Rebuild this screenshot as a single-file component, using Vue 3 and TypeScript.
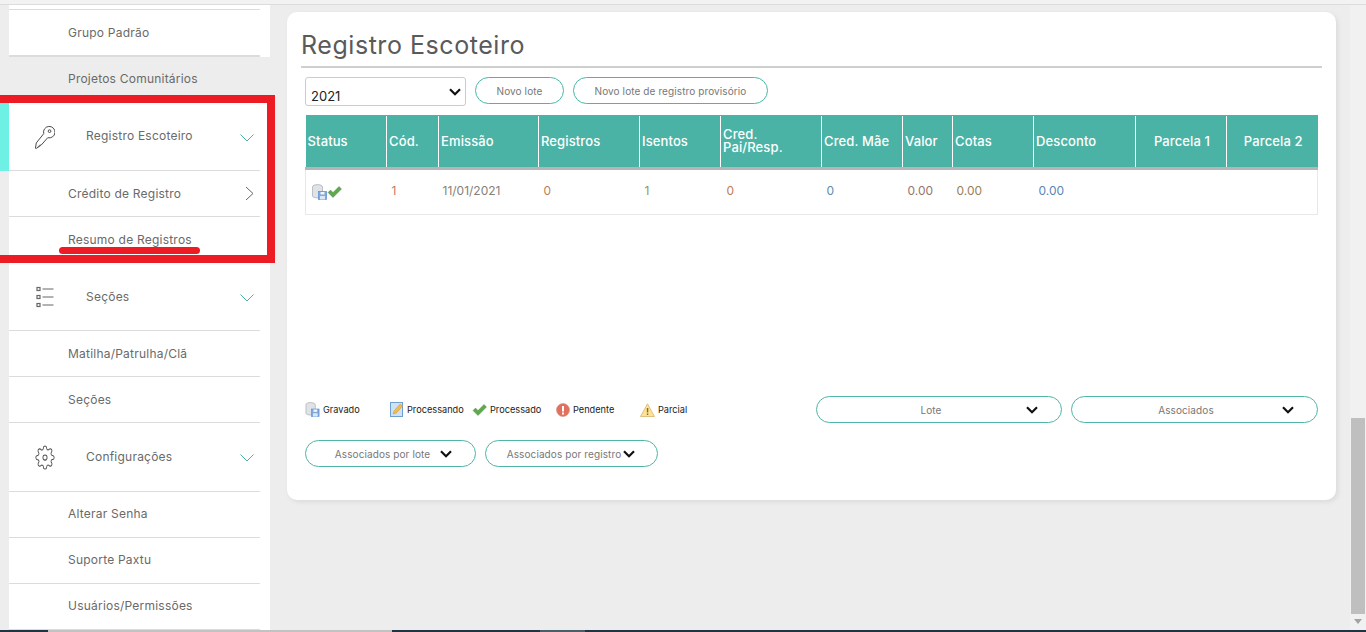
<script setup lang="ts">
interface MenuRow {
  label: string
  icon?: 'key' | 'list' | 'gear'
  active?: boolean
  sub?: boolean
}

interface Col {
  title: string
  width: number
  value: string
  color: string
  pad: number
  center?: boolean
}

const menu: MenuRow[] = [
  { label: 'Registro Escoteiro', icon: 'key', active: true },
  { label: 'Crédito de Registro', sub: true },
  { label: 'Resumo de Registros' },
  { label: 'Seções', icon: 'list' },
  { label: 'Matilha/Patrulha/Clã' },
  { label: 'Seções' },
  { label: 'Configurações', icon: 'gear' },
  { label: 'Alterar Senha' },
  { label: 'Suporte Paxtu' },
  { label: 'Usuários/Permissões' }
]

const cols: Col[] = [
  { title: 'Status', width: 81, value: '', color: '#666', pad: 0 },
  { title: 'Cód.', width: 52, value: '1', color: '#c9785f', pad: 5 },
  { title: 'Emissão', width: 100, value: '11/01/2021', color: '#85807a', pad: 4 },
  { title: 'Registros', width: 101, value: '0', color: '#bd8055', pad: 5 },
  { title: 'Isentos', width: 81, value: '1', color: '#8a9660', pad: 5 },
  { title: 'Cred.\nPai/Resp.', width: 101, value: '0', color: '#c07a5a', pad: 6 },
  { title: 'Cred. Mãe', width: 81, value: '0', color: '#5a8db5', pad: 5 },
  { title: 'Valor', width: 50, value: '0.00', color: '#96756a', pad: 5 },
  { title: 'Cotas', width: 81, value: '0.00', color: '#98805a', pad: 4 },
  { title: 'Desconto', width: 102, value: '0.00', color: '#5a85b5', pad: 5 },
  { title: 'Parcela 1', width: 91, value: '', color: '#666', pad: 0, center: true },
  { title: 'Parcela 2', width: 91, value: '', color: '#666', pad: 0, center: true }
]

const legend = [
  { kind: 'disk', label: 'Gravado', width: 85 },
  { kind: 'edit', label: 'Processando', width: 82 },
  { kind: 'check', label: 'Processado', width: 84 },
  { kind: 'error', label: 'Pendente', width: 84 },
  { kind: 'warn', label: 'Parcial', width: 60 }
]
</script>

<template>
  <div class="page">
    <div class="top-line"></div>
    <div class="body">
      <aside class="side">
        <div class="side-row first"><span>Grupo Padrão</span></div>
        <div class="side-row plain"><span>Projetos Comunitários</span></div>
        <div
          v-for="row in menu"
          :key="row.label + (row.icon || '')"
          class="side-row"
          :class="{ head: row.icon, active: row.active, tall: row.icon === 'gear' }"
        >
          <svg v-if="row.icon === 'key'" class="mi" viewBox="0 0 22 26" fill="none" stroke="#4a4a4a" stroke-width="1.1">
            <path d="M9.600 8.800A6.300 6.300 0 1 1 14 13.200L6.600 21.600l-1.200-.4-.2 1.600-1.500-.2-.3 1.600-1.200-.1-.9 1.200-.8-.5L1.400 19z" />
            <circle cx="16" cy="6" r="1.500" />
          </svg>
          <svg v-else-if="row.icon === 'list'" class="mi" viewBox="0 0 20 24" fill="none" stroke="#666" stroke-width="1.200">
            <rect x="2" y="2" width="3" height="3" />
            <rect x="2" y="10" width="3" height="3" />
            <rect x="2" y="18" width="3" height="3" />
            <path d="M7.500 3.500h11M7.500 11.500h11M7.500 19.500h11" />
          </svg>
          <svg v-else-if="row.icon === 'gear'" class="mi" viewBox="0 0 24 24" fill="none" stroke="#4a4a4a" stroke-width="1" preserveAspectRatio="none">
            <circle cx="12" cy="12" r="2.500" />
            <path d="M19.4 15a1.65 1.65 0 0 0 .33 1.82l.06.06a2 2 0 0 1 0 2.83 2 2 0 0 1-2.83 0l-.06-.06a1.65 1.65 0 0 0-1.82-.33 1.65 1.65 0 0 0-1 1.51V21a2 2 0 0 1-2 2 2 2 0 0 1-2-2v-.09A1.65 1.65 0 0 0 9 19.4a1.65 1.65 0 0 0-1.82.33l-.06.06a2 2 0 0 1-2.83 0 2 2 0 0 1 0-2.83l.06-.06a1.65 1.65 0 0 0 .33-1.82 1.65 1.65 0 0 0-1.51-1H3a2 2 0 0 1-2-2 2 2 0 0 1 2-2h.09A1.65 1.65 0 0 0 4.6 9a1.65 1.65 0 0 0-.33-1.82l-.06-.06a2 2 0 0 1 0-2.83 2 2 0 0 1 2.83 0l.06.06a1.65 1.65 0 0 0 1.82.33H9a1.65 1.65 0 0 0 1-1.51V3a2 2 0 0 1 2-2 2 2 0 0 1 2 2v.09a1.65 1.65 0 0 0 1 1.51 1.65 1.65 0 0 0 1.82-.33l.06-.06a2 2 0 0 1 2.83 0 2 2 0 0 1 0 2.83l-.06.06a1.65 1.65 0 0 0-.33 1.82V9a1.65 1.65 0 0 0 1.51 1H21a2 2 0 0 1 2 2 2 2 0 0 1-2 2h-.09a1.65 1.65 0 0 0-1.51 1z" />
          </svg>
          <span>{{ row.label }}</span>
          <svg v-if="row.icon" class="chev" viewBox="0 0 14 8" fill="none" stroke="#4db6a6">
            <path d="M.5 .5 7 7 13.500 .5" />
          </svg>
          <svg v-if="row.sub" class="arrow" viewBox="0 0 9 15" fill="none" stroke="#666">
            <path d="M1 1l7 6.500-7 6.500" />
          </svg>
        </div>
      </aside>

      <main class="main">
        <section class="card">
          <h1 class="title">Registro Escoteiro</h1>
          <div class="tools">
            <div class="select-wrap">
              <select class="year"><option>2021</option></select>
              <svg class="sel-chev" viewBox="0 0 12 8" fill="none" stroke="#111" stroke-width="2.200">
                <path d="M1 1.200l5 5 5-5" />
              </svg>
            </div>
            <button class="pill new-lot">Novo lote</button>
            <button class="pill new-prov">Novo lote de registro provisório</button>
          </div>

          <table class="grid">
            <colgroup>
              <col v-for="c in cols" :key="c.title" :style="{ width: c.width + 'px' }" />
            </colgroup>
            <thead>
              <tr>
                <th v-for="c in cols" :key="c.title" :class="{ center: c.center }">{{ c.title }}</th>
              </tr>
            </thead>
            <tbody>
              <tr>
                <td v-for="c in cols" :key="c.title" :style="{ color: c.color, paddingLeft: c.pad + 'px' }">
                  <span v-if="c.title === 'Status'" class="status-icons">
                    <svg width="15" height="16" viewBox="0 0 15 16">
                      <path d="M.5 3c0-3.200 10-3.200 10 0v9c0 2.500-10 2.500-10 0z" fill="#dfe2e6" stroke="#a5abb1" stroke-width=".7" />
                      <rect x="6.500" y="7.500" width="8" height="8" fill="#7ea9dc" stroke="#5b8fd0" stroke-width=".7" />
                      <rect x="8.500" y="8" width="4" height="2.500" fill="#f2f6fb" />
                      <rect x="8" y="12" width="5" height="3.500" fill="#dce8f5" />
                    </svg>
                    <svg width="15" height="12" viewBox="0 0 15 12">
                      <path d="M1 6.500 3.500 4l2.500 2.500L12 .5 14.500 3l-8.500 8.500z" fill="#5fa84f" stroke="#4a8a3e" stroke-width=".4" />
                    </svg>
                  </span>
                  {{ c.value }}
                </td>
              </tr>
            </tbody>
          </table>

          <div class="lower">
            <div class="legend">
              <div v-for="item in legend" :key="item.kind" class="leg" :style="{ width: item.width + 'px' }">
                <svg v-if="item.kind === 'disk'" width="15" height="15" viewBox="0 0 15 16">
                  <path d="M.5 3c0-3.200 10-3.200 10 0v9c0 2.500-10 2.500-10 0z" fill="#dfe2e6" stroke="#a5abb1" stroke-width=".7" />
                  <rect x="6.500" y="7.500" width="8" height="8" fill="#7ea9dc" stroke="#5b8fd0" stroke-width=".7" />
                  <rect x="8.500" y="8" width="4" height="2.500" fill="#f2f6fb" />
                  <rect x="8" y="12" width="5" height="3.500" fill="#dce8f5" />
                </svg>
                <svg v-else-if="item.kind === 'edit'" width="14" height="15" viewBox="0 0 14 15">
                  <rect x=".5" y=".5" width="12" height="14" fill="#cfe2f5" stroke="#6f9fd0" />
                  <path d="M3 12l1-3 6-7 2.500 2-6 7z" fill="#eebc55" stroke="#c99433" stroke-width=".5" />
                </svg>
                <svg v-else-if="item.kind === 'check'" width="15" height="12" viewBox="0 0 15 12">
                  <path d="M1 6.500 3.500 4l2.500 2.500L12 .5 14.500 3l-8.500 8.500z" fill="#5fa84f" stroke="#4a8a3e" stroke-width=".4" />
                </svg>
                <svg v-else-if="item.kind === 'error'" width="14" height="14" viewBox="0 0 14 14">
                  <circle cx="7" cy="7" r="6.500" fill="#e2705f" stroke="#d0917f" stroke-width=".6" />
                  <rect x="6" y="3" width="2" height="5.500" fill="#fff" />
                  <rect x="6" y="9.500" width="2" height="2" fill="#fff" />
                </svg>
                <svg v-else width="15" height="14" viewBox="0 0 15 14">
                  <path d="M7.500 .8 14.500 13.500H.5z" fill="#fbe49a" stroke="#d8b46a" stroke-width=".8" />
                  <rect x="6.800" y="5" width="1.500" height="4.500" fill="#9a6a1a" />
                  <rect x="6.800" y="10.500" width="1.500" height="1.500" fill="#9a6a1a" />
                </svg>
                <span>{{ item.label }}</span>
              </div>
            </div>
            <button class="pill drop lote">
              <span>Lote</span>
              <svg viewBox="0 0 12 8" fill="none" stroke="#111" stroke-width="2.200"><path d="M1 1.200l5 5 5-5" /></svg>
            </button>
            <button class="pill drop assoc">
              <span>Associados</span>
              <svg viewBox="0 0 12 8" fill="none" stroke="#111" stroke-width="2.200"><path d="M1 1.200l5 5 5-5" /></svg>
            </button>
          </div>

          <div class="bottom-btns">
            <button class="pill drop by-lot">
              <span>Associados por lote</span>
              <svg viewBox="0 0 12 8" fill="none" stroke="#111" stroke-width="2.200"><path d="M1 1.200l5 5 5-5" /></svg>
            </button>
            <button class="pill drop by-reg">
              <span>Associados por registro</span>
              <svg viewBox="0 0 12 8" fill="none" stroke="#111" stroke-width="2.200"><path d="M1 1.200l5 5 5-5" /></svg>
            </button>
          </div>
        </section>
      </main>

      <div class="scrollbar">
        <div class="thumb"></div>
        <div class="down"></div>
      </div>

      <!-- marcacao vermelha por cima do menu -->
      <div class="mark-box"></div>
      <div class="mark-line"></div>
    </div>
    <div class="taskbar">
      <i class="t1"></i><i class="t2"></i><i class="t3"></i><i class="t4"></i><i class="t5"></i>
    </div>
  </div>
</template>

<style>
html,
body {
  margin: 0;
  height: 100%;
  overflow: hidden;
}
</style>

<style scoped>
.page {
  width: 1366px;
  height: 632px;
  display: flex;
  flex-direction: column;
  background: #ededed;
  font-family: Inter, "Open Sans", sans-serif;
  color: #6a6a6a;
  overflow: hidden;
}

.top-line {
  height: 4px;
  flex: none;
  border-bottom: 1px solid #dcdcdc;
  background: #f2f2f2;
}

.body {
  flex: 1;
  display: flex;
  position: relative;
  min-height: 0;
}

.side {
  width: 261px;
  margin-left: 9px;
  flex: none;
  background: #fff;
  padding-top: 4px;
}

.side-row {
  height: 46px;
  width: 251px;
  box-sizing: border-box;
  border-bottom: 1px solid #dcdcdc;
  display: flex;
  align-items: center;
  padding-left: 59px;
  font-size: 12px;
  letter-spacing: 0.22px;
  position: relative;
}

.side-row:nth-child(n+10) {
  padding-bottom: 2px;
}

.side-row.first {
  border-top: 1px solid #dcdcdc;
  border-bottom: 2px solid #dcdcdc;
  height: 48px;
}

.side-row.plain {
  background: #ededed;
  width: 261px;
  height: 46px;
  border-bottom: none;
  padding-bottom: 4px;
}

.side-row.head {
  height: 68px;
  padding-left: 77px;
  padding-bottom: 2px;
}

.side-row.head:nth-child(6) {
  padding-bottom: 0;
}

.side-row.tall {
  height: 69px;
}

.side-row.active::before {
  content: "";
  position: absolute;
  left: -9px;
  top: 0;
  bottom: -1px;
  width: 9px;
  background: #6ff0e4;
}

.mi {
  position: absolute;
  left: 26px;
  top: 22px;
  width: 20px;
  height: 25px;
}

.chev {
  position: absolute;
  left: 231px;
  top: 31px;
  width: 14px;
  height: 8px;
}

.arrow {
  position: absolute;
  left: 236px;
  top: 15px;
  width: 9px;
  height: 15px;
}

.main {
  flex: 1;
  min-width: 0;
  padding: 7px 14px 0 17px;
}

.card {
  height: 488px;
  box-sizing: border-box;
  background: #fff;
  border-radius: 10px;
  box-shadow: 2px 2px 5px rgba(0, 0, 0, 0.08);
  padding: 0 14px;
}

.title {
  margin: 0;
  height: 56px;
  width: 1021px;
  box-sizing: border-box;
  line-height: 66px;
  font-size: 25px;
  font-weight: 400;
  letter-spacing: 0.55px;
  color: #5a5a5a;
  border-bottom: 2px solid #cfcfcf;
}

.tools {
  display: flex;
  align-items: flex-start;
  margin: 9px 0 9px 4px;
  height: 29px;
}

.select-wrap {
  position: relative;
  width: 161px;
  height: 29px;
  margin-right: 9px;
}

.year {
  appearance: none;
  width: 100%;
  height: 100%;
  border: 1px solid #ccc;
  border-radius: 3px;
  background: #fff;
  font: 13px Inter, sans-serif;
  color: #222;
  padding: 9px 0 0 5px;
}

.sel-chev {
  position: absolute;
  right: 5px;
  top: 11px;
  width: 12px;
  height: 8px;
}

.pill {
  border: 1px solid #4db6a6;
  border-radius: 14px;
  background: #fff;
  font: 10px Inter, sans-serif;
  letter-spacing: 0.1px;
  color: #777;
  height: 27px;
  padding: 0;
}

.new-lot {
  width: 89px;
  margin-right: 9px;
}

.new-prov {
  width: 195px;
}

.grid {
  margin-left: 4px;
  width: 1013px;
  border-collapse: collapse;
  table-layout: fixed;
}

.grid th {
  height: 53px;
  box-sizing: border-box;
  background: #4bb3a5;
  color: #fff;
  font-size: 13px;
  font-weight: 500;
  letter-spacing: 0.12px;
  text-align: left;
  line-height: 13px;
  padding: 0 0 1px 2px;
  white-space: pre-line;
  border-left: 1px solid #fff;
  border-bottom: 3px solid #b5b5b5;
  border-top: 1px solid #4bb3a5;
}

.grid th:first-child {
  border-left: none;
}

.grid th.center {
  text-align: center;
}

.grid tbody tr {
  border-left: 1px solid #e8e8e8;
  border-right: 1px solid #e8e8e8;
  border-bottom: 1px solid #e8e8e8;
}

.grid td {
  height: 46px;
  box-sizing: border-box;
  font-size: 12px;
  padding: 0 0 4px;
}

.status-icons {
  display: flex;
  align-items: center;
  margin: 4px 0 0 6px;
}

.lower {
  display: flex;
  align-items: center;
  margin: 181px 0 0 4px;
  height: 27px;
}

.legend {
  display: flex;
  width: 511px;
}

.leg {
  display: flex;
  align-items: center;
  gap: 3px;
  font-size: 9.200px;
  color: #222;
  white-space: nowrap;
}

.drop {
  position: relative;
  box-sizing: border-box;
}

.drop svg {
  position: absolute;
  top: 9px;
  right: 23px;
  width: 12px;
  height: 8px;
}

.lote {
  width: 246px;
  margin-right: 9px;
}

.lote span {
  margin-left: -16px;
}

.assoc {
  width: 247px;
}

.assoc span {
  margin-left: -17px;
}

.bottom-btns {
  display: flex;
  gap: 9px;
  margin: 17px 0 0 4px;
}

.by-lot {
  width: 171px;
}

.by-lot span {
  display: inline-block;
  margin-right: 16px;
}

.by-reg {
  width: 173px;
}

.by-reg span {
  display: inline-block;
  margin-right: 15px;
}

.by-reg svg {
  right: 22px;
}

.scrollbar {
  width: 16px;
  flex: none;
  background: #f1f1f1;
  display: flex;
  flex-direction: column;
  padding-top: 413px;
  box-sizing: border-box;
  align-items: center;
}

.thumb {
  width: 14px;
  height: 196px;
  background: #bfbfbf;
}

.down {
  margin-top: 5px;
  width: 0;
  height: 0;
  border-left: 4px solid transparent;
  border-right: 4px solid transparent;
  border-top: 5px solid #a3a3a3;
}

.mark-box {
  position: absolute;
  left: 0;
  top: 90px;
  width: 275px;
  height: 168px;
  box-sizing: border-box;
  border: 8px solid #ed1c24;
  border-left: none;
}

.mark-line {
  position: absolute;
  left: 59px;
  top: 242px;
  width: 141px;
  height: 7px;
  border-radius: 4px;
  background: #ed1c24;
}

.taskbar {
  height: 2px;
  flex: none;
  display: flex;
}

.taskbar i {
  display: block;
}

.t1 {
  width: 48px;
  background: #1f3440;
}

.t2 {
  width: 344px;
  background: #c2c2c2;
}

.t3 {
  width: 148px;
  background: #1f3440;
}

.t4 {
  width: 45px;
  background: #4a5d68;
}

.t5 {
  flex: 1;
  background: #1f3440;
}
</style>
